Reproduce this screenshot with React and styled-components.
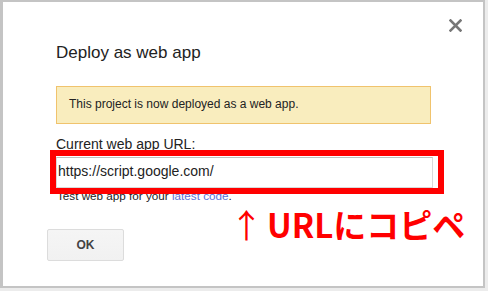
import React from 'react';
import styled, { createGlobalStyle } from 'styled-components';

const GlobalStyle = createGlobalStyle`
  html, body {
    margin: 0;
    padding: 0;
    background: #ececec;
  }
  body {
    font-family: "Liberation Sans", Arial, sans-serif;
  }
`;

const Dialog = styled.div`
  position: relative;
  box-sizing: border-box;
  width: 485px;
  height: 288px;
  background: #fff;
  border-style: solid;
  border-color: #c4c4c4;
  border-width: 2px 2px 2px 3px;
  padding: 17px 21px 0 44px;
  color: #222;
`;

const TopBar = styled.div`
  display: flex;
  justify-content: flex-end;
  height: 13px;
`;

const CloseButton = styled.button`
  display: block;
  width: 13px;
  height: 13px;
  padding: 0;
  border: 0;
  background: none;
  cursor: pointer;
`;

const Main = styled.div`
  margin: 0 31px 0 9px;
`;

const Title = styled.h2`
  margin: 11px 0 0;
  font-size: 17px;
  line-height: 20px;
  font-weight: normal;
  color: #222;
`;

const Notice = styled.div`
  box-sizing: border-box;
  height: 38px;
  margin-top: 23px;
  padding: 10px 12px 0;
  background: #f9edbe;
  border: 1px solid #f0c36d;
  font-size: 12px;
  line-height: 14px;
  color: #222;
`;

const Label = styled.div`
  margin-top: 12px;
  font-size: 14px;
  line-height: 16px;
  color: #222;
`;

const Field = styled.div`
  position: relative;
  height: 31px;
  margin-top: 5px;
`;

const UrlInput = styled.input`
  display: block;
  box-sizing: border-box;
  width: calc(100% + 2px);
  height: 31px;
  margin: 0;
  padding: 0 0 3px 1px;
  border: 1px solid #d9d9d9;
  border-top-color: #c0c0c0;
  border-radius: 0;
  font-family: "Liberation Sans", Arial, sans-serif;
  font-size: 14px;
  color: #222;
  background: #fff;
  outline: none;
`;

// red annotation drawn over the screenshot
const RedFrame = styled.div`
  position: absolute;
  top: -7px;
  left: -6px;
  right: -13px;
  bottom: -6px;
  border: 6px solid #ff0000;
  z-index: 2;
  pointer-events: none;
`;

const Hint = styled.div`
  margin-top: 1px;
  padding-left: 1px;
  font-size: 11.7px;
  line-height: 14px;
  color: #222;
`;

const Link = styled.a`
  color: #5b6fd8;
  text-decoration: none;
`;

const Footer = styled.div`
  display: flex;
  margin-top: 26px;
`;

const OkButton = styled.button`
  box-sizing: border-box;
  width: 77px;
  height: 32px;
  padding: 0;
  border: 1px solid #dcdcdc;
  border-radius: 2px;
  background: linear-gradient(#f5f5f5, #f1f1f1);
  font-family: "Liberation Sans", Arial, sans-serif;
  font-size: 12px;
  font-weight: bold;
  color: #444;
`;

const Annotation = styled.div`
  position: absolute;
  left: 227px;
  top: 209px;
  font-family: "Noto Sans CJK JP", sans-serif;
  font-size: 33px;
  line-height: 27px;
  font-weight: bold;
  color: #ff0000;
  white-space: nowrap;
  z-index: 3;
`;

const Arrow = styled.span`
  font-weight: normal;
  margin-right: 4px;
`;

const CloseIcon = () => (
  <svg width="13" height="13" viewBox="0 0 13 13">
    <path d="M1.5 1.5 L11.5 11.5 M11.5 1.5 L1.5 11.5" stroke="#777" strokeWidth="2.6" strokeLinecap="square" />
  </svg>
);

const App = () => (
  <>
    <GlobalStyle />
    <Dialog>
      <TopBar>
        <CloseButton aria-label="Close">
          <CloseIcon />
        </CloseButton>
      </TopBar>
      <Main>
        <Title>Deploy as web app</Title>
        <Notice>This project is now deployed as a web app.</Notice>
        <Label>Current web app URL:</Label>
        <Field>
          <UrlInput readOnly value="https://script.google.com/" />
          <RedFrame />
        </Field>
        <Hint>
          Test web app for your <Link href="#">latest code</Link>.
        </Hint>
      </Main>
      <Footer>
        <OkButton>OK</OkButton>
      </Footer>
      <Annotation>
        <Arrow>↑</Arrow>URLにコピペ
      </Annotation>
    </Dialog>
  </>
);

export default App;
